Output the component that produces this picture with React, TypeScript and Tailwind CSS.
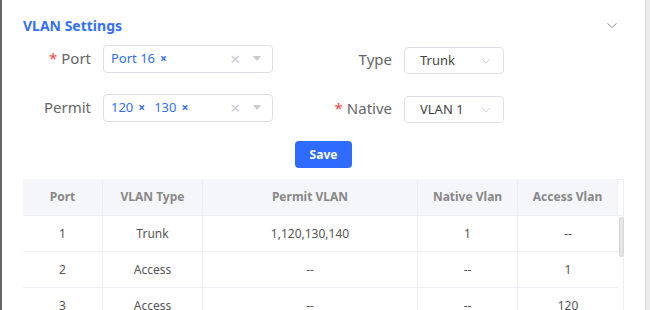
import type { ReactNode } from 'react';

const font = { fontFamily: '"Noto Sans", "Noto Sans CJK SC", sans-serif' };

function Chevron({ className }: { className?: string }) {
  return (
    <svg viewBox="0 0 12 8" className={className} fill="none" stroke="currentColor" strokeWidth="1">
      <path d="M1 1.5 L6 6.5 L11 1.5" />
    </svg>
  );
}

function Label({ children, required, className }: { children: ReactNode; required?: boolean; className?: string }) {
  return (
    <div className={`text-right text-[15px] text-[#666] leading-none ${className ?? ''}`}>
      {required && <span className="mr-1 text-[#f5453d]">*</span>}
      {children}
    </div>
  );
}

function MultiSelect({ tags }: { tags: string[] }) {
  return (
    <div className="flex h-[28px] w-[170px] items-center rounded-[4px] border border-[#dcdfe6] pl-[7px] pr-[10px]">
      <div className="flex flex-1 items-center gap-[9px] text-[13px] text-[#3370ff]">
        {tags.map((t) => (
          <span key={t} className="flex items-center gap-[5px]">
            {t}
            <span className="text-[12px] font-bold">×</span>
          </span>
        ))}
      </div>
      <span className="text-[17px] leading-none text-[#c8cbd2]">×</span>
      <svg viewBox="0 0 10 6" className="ml-[12px] h-[5px] w-[10px] text-[#c8cbd2]" fill="currentColor">
        <path d="M0 0 H10 L5 6 Z" />
      </svg>
    </div>
  );
}

function SingleSelect({ value }: { value: string }) {
  return (
    <div className="flex h-[27px] w-[100px] items-center justify-between rounded-[4px] border border-[#dcdfe6] pl-[15px] pr-[11px] text-[13px] text-[#444]">
      <span>{value}</span>
      <Chevron className="h-[6px] w-[12px] text-[#bbb]" />
    </div>
  );
}

const rows = [
  ['1', 'Trunk', '1,120,130,140', '1', '--'],
  ['2', 'Access', '--', '--', '1'],
  ['3', 'Access', '--', '--', '120'],
];

const cols = ['w-[80px]', 'w-[100px]', 'w-[215px]', 'w-[100px]', 'w-[100px]'];
const heads = ['Port', 'VLAN Type', 'Permit VLAN', 'Native Vlan', 'Access Vlan'];

export default function App() {
  return (
    <div className="flex h-[310px] w-[650px] overflow-hidden bg-white" style={font}>
      <div className="w-[2px] shrink-0 bg-[#666]" />
      <div className="flex min-w-0 flex-1 flex-col">
        <div className="ml-[15px] mr-[14px] mt-[4px] h-px bg-[#eef0f6]" />
        <div className="flex items-center justify-between pl-[21px] pr-[27px] pt-[11px]">
          <span className="text-[14px] font-bold text-[#3370ff]">VLAN Settings</span>
          <Chevron className="h-[7px] w-[12px] text-[#777]" />
        </div>

        <div className="mt-[7px] flex flex-col gap-[18px] pl-[21px]">
          <div className="flex items-center">
            <Label required className="w-[68px]">Port</Label>
            <div className="ml-[12px]"><MultiSelect tags={['Port 16']} /></div>
            <Label className="w-[119px] pt-[2px]">Type</Label>
            <div className="ml-[12px] mt-[4px]"><SingleSelect value="Trunk" /></div>
          </div>
          <div className="flex items-center">
            <Label className="w-[68px]">Permit</Label>
            <div className="ml-[12px]"><MultiSelect tags={['120', '130']} /></div>
            <Label required className="w-[119px] pt-[2px]">Native</Label>
            <div className="ml-[12px] mt-[4px]"><SingleSelect value="VLAN 1" /></div>
          </div>
        </div>

        <div className="mt-[18px] flex justify-center">
          <button className="h-[27px] w-[57px] rounded-[4px] bg-[#2f6bff] text-[12px] font-bold text-white">Save</button>
        </div>

        <div className="ml-[21px] mt-[11px] w-[601px]">
          <div className="flex h-[37px] border-b border-[#eceef3]">
            {heads.map((h, i) => (
              <div
                key={h}
                className={`${cols[i]} flex items-center justify-center border-r border-[#eceef3] bg-[#f5f6fa] text-[12px] font-bold text-[#888] last:border-r-0`}
              >
                {h}
              </div>
            ))}
            <div className="w-[6px] border-r border-t border-[#eceef3] bg-white" />
          </div>
          <div className="flex">
            <div>
              {rows.map((r, ri) => (
                <div key={ri} className="flex h-[36px] border-b border-[#eceef3]">
                  {r.map((c, i) => (
                    <div
                      key={i}
                      className={`${cols[i]} flex items-center justify-center border-r border-[#eceef3] text-[12px] text-[#555] last:border-r-0`}
                    >
                      {c}
                    </div>
                  ))}
                </div>
              ))}
            </div>
            <div className="w-[6px] border-r border-[#eceef3] pt-[1px]">
              <div className="ml-[1px] h-[40px] w-[5px] rounded-[3px] border border-[#d5d5d5] bg-[#e6e6e6]" />
            </div>
          </div>
        </div>
      </div>
      <div className="w-[5px] shrink-0 border-l border-[#d6d6d6] bg-[#ececec]" />
    </div>
  );
}
